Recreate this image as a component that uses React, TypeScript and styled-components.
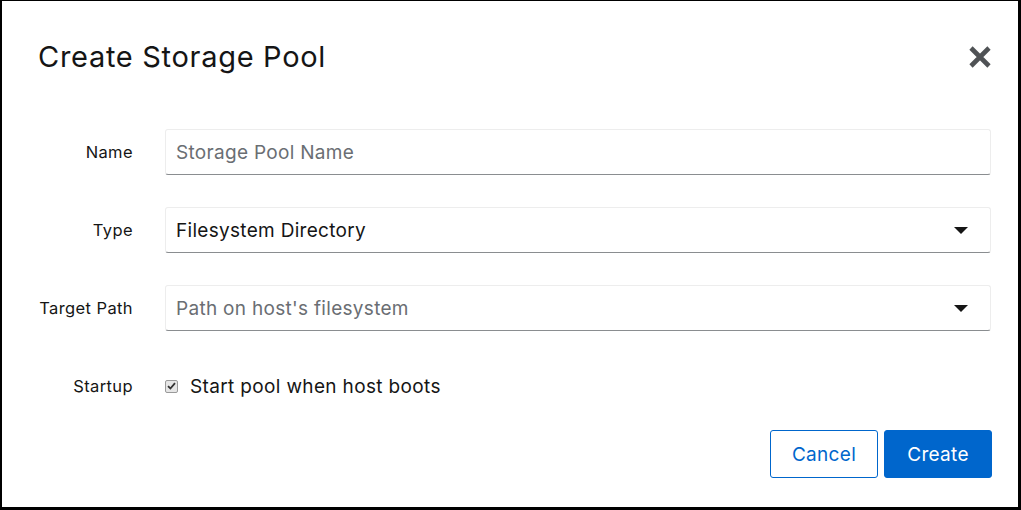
import React from "react";
import styled, { createGlobalStyle } from "styled-components";

const Global = createGlobalStyle`
  html, body { margin: 0; padding: 0; background: #fff; }
  * { box-sizing: border-box; }
  body { font-family: Inter, "Open Sans", "Liberation Sans", sans-serif; color: #151515; }
`;

const Modal = styled.div`
  width: 1021px;
  height: 510px;
  background: #fff;
  border-style: solid;
  border-color: #000;
  border-width: 1px 3px 3px 2px;
  padding: 0 26px 0 36px;
  display: flex;
  flex-direction: column;
`;

const Header = styled.div`
  display: flex;
  align-items: center;
  justify-content: space-between;
  height: 112px;
  padding-bottom: 1px;
`;

const Title = styled.h1`
  margin: 0;
  font-size: 29px;
  font-weight: 400;
  letter-spacing: 0.7px;
  color: #151515;
`;

const CloseButton = styled.button`
  border: 0;
  background: transparent;
  padding: 0;
  width: 24px;
  height: 24px;
  display: flex;
  cursor: pointer;
  color: #4f5255;
  margin-top: 1px;
`;

const Form = styled.div`
  margin-top: 16px;
  display: grid;
  grid-template-columns: 95px 1fr;
  column-gap: 32px;
  row-gap: 32px;
  padding-right: 1px;
`;

const Label = styled.label`
  font-size: 16.5px;
  letter-spacing: 0.4px;
  text-align: right;
  align-self: center;
  color: #151515;
  white-space: nowrap;
`;

const Field = styled.div<{ $placeholder?: boolean }>`
  height: 46px;
  border: 1px solid #ededed;
  border-bottom-color: #8a8d90;
  border-radius: 3px;
  display: flex;
  align-items: center;
  justify-content: space-between;
  padding: 0 22px 0 10px;
  font-size: 19px;
  letter-spacing: 0.3px;
  color: ${(p) => (p.$placeholder ? "#6a6e73" : "#151515")};
  background: #fff;
`;

const Caret = styled.span`
  width: 0;
  height: 0;
  border-left: 7px solid transparent;
  border-right: 7px solid transparent;
  border-top: 7px solid #151515;
`;

const CheckRow = styled.div`
  height: 46px;
  display: flex;
  align-items: center;
  gap: 12px;
  font-size: 19px;
  letter-spacing: 0.35px;
  color: #151515;
`;

const Check = styled.span`
  width: 13px;
  height: 13px;
  border: 1px solid #9a9a9a;
  border-radius: 2px;
  background: #e6e6e6;
  display: flex;
  align-items: center;
  justify-content: center;
`;

const Footer = styled.div`
  margin-top: 21px;
  display: flex;
  justify-content: flex-end;
  gap: 6px;
`;

const Button = styled.button<{ $primary?: boolean }>`
  width: 108px;
  height: 48px;
  border-radius: 3px;
  font-family: inherit;
  font-size: 19px;
  letter-spacing: 0.3px;
  cursor: pointer;
  border: 1px solid #0066cc;
  background: ${(p) => (p.$primary ? "#0066cc" : "#fff")};
  color: ${(p) => (p.$primary ? "#fff" : "#0066cc")};
`;

export default function App() {
  return (
    <>
      <Global />
      <Modal>
        <Header>
          <Title>Create Storage Pool</Title>
          <CloseButton aria-label="Close">
            <svg width="24" height="24" viewBox="0 0 24 24">
              <path d="M3 3 L21 21 M21 3 L3 21" stroke="currentColor" strokeWidth="4.6" strokeLinecap="butt" />
            </svg>
          </CloseButton>
        </Header>
        <Form>
          <Label>Name</Label>
          <Field $placeholder>Storage Pool Name</Field>
          <Label>Type</Label>
          <Field>
            Filesystem Directory
            <Caret />
          </Field>
          <Label>Target Path</Label>
          <Field $placeholder>
            Path on host's filesystem
            <Caret />
          </Field>
          <Label>Startup</Label>
          <CheckRow>
            <Check>
              <svg width="9" height="8" viewBox="0 0 9 8">
                <path d="M1 4.2 L3.4 6.5 L8 1.2" stroke="#333" strokeWidth="1.8" fill="none" />
              </svg>
            </Check>
            Start pool when host boots
          </CheckRow>
        </Form>
        <Footer>
          <Button>Cancel</Button>
          <Button $primary>Create</Button>
        </Footer>
      </Modal>
    </>
  );
}
